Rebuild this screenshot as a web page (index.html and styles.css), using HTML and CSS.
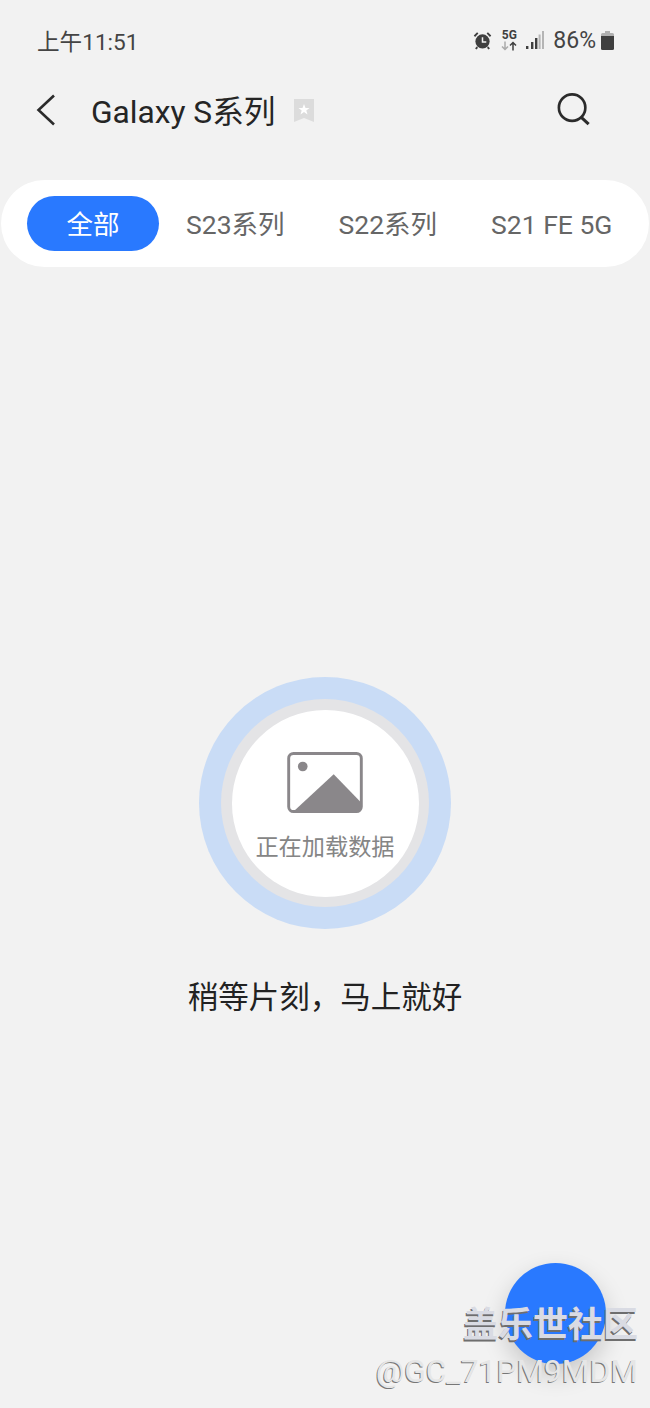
FILE: index.html
```html
<!DOCTYPE html>
<html>
<head lang="en">
    <meta charset="UTF-8">
    <title>Galaxy S系列</title>
    <link rel="stylesheet" href="styles.css">
</head>
<body>
<div id="page">
    <div id="status">
        <span id="time">上午11:51</span>
        <div id="status-right">
            <svg class="ic-alarm" width="19" height="19" viewBox="0 0 20 20">
                <circle cx="10" cy="11" r="7.5" fill="#3f3f3f"/>
                <path d="M1.500 5.500 5 2M18.500 5.500 15 2M4.500 17 3 19M15.500 17 17 19" stroke="#3f3f3f" stroke-width="2" fill="none"/>
                <path d="M10 6.500V11.500H14" stroke="#f2f2f2" stroke-width="1.600" fill="none"/>
            </svg>
            <div class="ic-5g">
                <span>5G</span>
                <svg width="16" height="10" viewBox="0 0 16 9">
                    <path d="M4 0V8M1 5 4 8 7 5" stroke="#aaa" stroke-width="1.500" fill="none"/>
                    <path d="M12 9V1M9 4 12 1 15 4" stroke="#3f3f3f" stroke-width="1.500" fill="none"/>
                </svg>
            </div>
            <svg class="ic-signal" width="18" height="18" viewBox="0 0 18 18">
                <rect x="0" y="15" width="2.400" height="3" fill="#3f3f3f"/>
                <rect x="5" y="11" width="2.400" height="7" fill="#3f3f3f"/>
                <rect x="9" y="7" width="2.400" height="11" fill="#3f3f3f"/>
                <rect x="12.600" y="3.500" width="2" height="14.500" fill="#b5b5b5"/>
                <rect x="16" y="0" width="2" height="18" fill="#b5b5b5"/>
            </svg>
            <span id="battery-num">86%</span>
            <svg class="ic-battery" width="13" height="19" viewBox="0 0 13 19">
                <path d="M4 0H9V2H11.500Q13 2 13 3.500V5H0V3.500Q0 2 1.500 2H4Z" fill="#b0b0b0"/>
                <path d="M0 5H13V17.500Q13 19 11.500 19H1.500Q0 19 0 17.500Z" fill="#3f3f3f"/>
            </svg>
        </div>
    </div>

    <div id="header">
        <svg class="ic-back" width="20" height="32" viewBox="0 0 20 32">
            <path d="M18 1.500 2.500 16 18 30.500" stroke="#2b2b2b" stroke-width="2.600" fill="none"/>
        </svg>
        <h1>Galaxy S系列</h1>
        <svg class="ic-fav" width="20" height="23" viewBox="0 0 20 23">
            <path d="M0 0H20V23L10 19 0 23Z" fill="#dcdcdc"/>
            <path d="M10 5 11.500 9H15.500L12.300 11.500 13.500 15.500 10 13 6.500 15.500 7.700 11.500 4.500 9H8.500Z" fill="#fff"/>
        </svg>
        <svg class="ic-search" width="34" height="34" viewBox="0 0 36 36">
            <circle cx="16" cy="15.500" r="14" stroke="#2b2b2b" stroke-width="2.800" fill="none"/>
            <path d="M26 26 33.500 33" stroke="#2b2b2b" stroke-width="3.200" fill="none"/>
        </svg>
    </div>

    <ul id="tabs">
        <li class="selected">全部</li>
        <li>S23系列</li>
        <li>S22系列</li>
        <li>S21 FE 5G</li>
    </ul>

    <div id="loading">
        <div id="ring-blue">
            <div id="ring-gray">
                <div id="ring-white">
                    <svg width="76" height="61" viewBox="0 0 78 63">
                        <rect x="1.500" y="1.500" width="75" height="60" rx="5" fill="none" stroke="#8a878a" stroke-width="3"/>
                        <circle cx="16" cy="15" r="5" fill="#8a878a"/>
                        <path d="M7 61 48 23 76 52V57Q76 61 72 61Z" fill="#8a878a"/>
                    </svg>
                    <p>正在加载数据</p>
                </div>
            </div>
        </div>
        <p id="wait">稍等片刻，马上就好</p>
    </div>

    <div id="fab"></div>
    <div id="mark">
        <div id="mark-title">盖乐世社区</div>
        <div id="mark-user">@GC_71PM9MDM</div>
    </div>
</div>
</body>
</html>
```

FILE: styles.css
```css
* {
    margin: 0;
    padding: 0;
}

ul, ol {
    list-style: none;
}

body {
    background: #f2f2f2;
    font-family: Roboto, "Noto Sans CJK SC", sans-serif;
}

#page {
    width: 650px;
    height: 1408px;
    position: relative;
    overflow: hidden;
}

#status {
    height: 80px;
    padding: 0 36px 0 37px;
    box-sizing: border-box;
    display: flex;
    align-items: center;
    justify-content: space-between;
    color: #444;
}

#time {
    font-size: 22.600px;
}

#status-right {
    display: flex;
    align-items: center;
}

.ic-5g {
    width: 16px;
    margin-left: 9px;
    display: flex;
    flex-direction: column;
    align-items: center;
    font-size: 12px;
    font-weight: 700;
    line-height: 12px;
    color: #3f3f3f;
}

.ic-5g svg {
    display: block;
}

.ic-signal {
    margin-left: 9px;
}

#battery-num {
    margin-left: 9px;
    font-size: 23px;
}

.ic-battery {
    margin-left: 5px;
}

#header {
    height: 60px;
    padding: 0 59px 0 36px;
    display: flex;
    align-items: center;
}

#header h1 {
    margin-left: 35px;
    margin-bottom: 2px;
    font-size: 31.700px;
    font-weight: 400;
    color: #252525;
}

.ic-fav {
    margin-left: 18px;
}

.ic-search {
    margin-left: auto;
}

#tabs {
    height: 87px;
    margin: 40px 1px 0;
    padding-left: 26px;
    background: #fff;
    border-radius: 44px;
    display: flex;
    align-items: center;
    font-size: 26.500px;
    color: #666;
}

#tabs li {
    padding: 3px 27px 0;
    line-height: 52px;
    white-space: nowrap;
}

#tabs .selected {
    padding: 3px 39.500px 0;
    background: #2979ff;
    border-radius: 28px;
    color: #fff;
}

#loading {
    padding-top: 410px;
    display: flex;
    flex-direction: column;
    align-items: center;
}

#ring-blue {
    width: 252px;
    height: 252px;
    border-radius: 50%;
    background: #c9dcf6;
    display: flex;
    align-items: center;
    justify-content: center;
}

#ring-gray {
    width: 208px;
    height: 208px;
    border-radius: 50%;
    background: #e4e4e6;
    display: flex;
    align-items: center;
    justify-content: center;
}

#ring-white {
    width: 187px;
    height: 187px;
    border-radius: 50%;
    background: #fff;
    display: flex;
    flex-direction: column;
    align-items: center;
    color: #858585;
    font-size: 23.200px;
}

#ring-white svg {
    margin-top: 42px;
}

#ring-white p {
    margin-top: 18px;
    line-height: 32px;
}

#wait {
    margin-top: 49px;
    font-size: 30.500px;
    line-height: 40px;
    color: #222;
}

#fab {
    width: 101px;
    height: 101px;
    position: absolute;
    left: 505px;
    top: 1263px;
    border-radius: 50%;
    background: #2979ff;
    box-shadow: 0 10px 24px rgba(0, 0, 0, 0.18);
}

#mark {
    position: absolute;
    right: 12px;
    top: 1304px;
    text-align: right;
    color: #d9dbe3;
}

#mark-title {
    font-size: 35px;
    font-weight: 700;
    line-height: 44px;
    text-shadow: -1px 2px 0 #6e6e6e;
}

#mark-user {
    margin-top: 2px;
    font-size: 31.700px;
    line-height: 44px;
    color: #e6e6e6;
    text-shadow: -1px 1px 0 #777;
}
```
